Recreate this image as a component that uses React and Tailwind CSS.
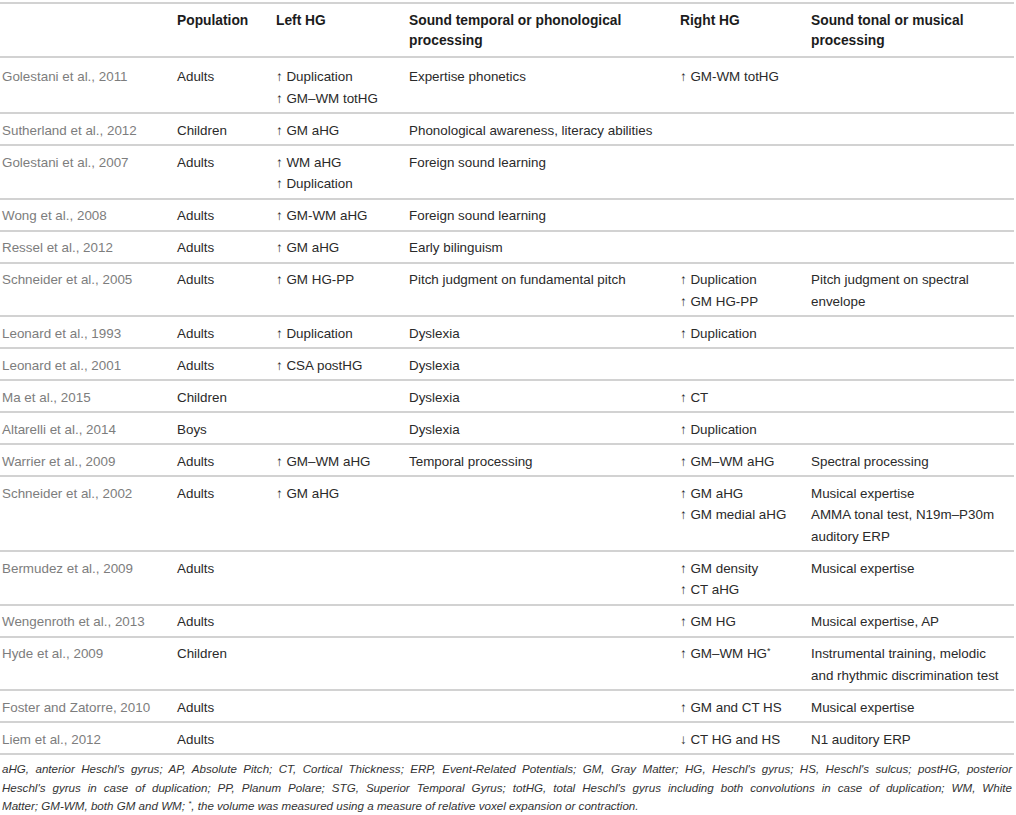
import React from 'react';

const rows = [
  { study: 'Golestani et al., 2011', pop: 'Adults', left: ['↑ Duplication', '↑ GM–WM totHG'], sound: ['Expertise phonetics'], right: ['↑ GM-WM totHG'], tonal: [] },
  { study: 'Sutherland et al., 2012', pop: 'Children', left: ['↑ GM aHG'], sound: ['Phonological awareness, literacy abilities'], right: [], tonal: [] },
  { study: 'Golestani et al., 2007', pop: 'Adults', left: ['↑ WM aHG', '↑ Duplication'], sound: ['Foreign sound learning'], right: [], tonal: [] },
  { study: 'Wong et al., 2008', pop: 'Adults', left: ['↑ GM-WM aHG'], sound: ['Foreign sound learning'], right: [], tonal: [] },
  { study: 'Ressel et al., 2012', pop: 'Adults', left: ['↑ GM aHG'], sound: ['Early bilinguism'], right: [], tonal: [] },
  { study: 'Schneider et al., 2005', pop: 'Adults', left: ['↑ GM HG-PP'], sound: ['Pitch judgment on fundamental pitch'], right: ['↑ Duplication', '↑ GM HG-PP'], tonal: ['Pitch judgment on spectral', 'envelope'] },
  { study: 'Leonard et al., 1993', pop: 'Adults', left: ['↑ Duplication'], sound: ['Dyslexia'], right: ['↑ Duplication'], tonal: [] },
  { study: 'Leonard et al., 2001', pop: 'Adults', left: ['↑ CSA postHG'], sound: ['Dyslexia'], right: [], tonal: [] },
  { study: 'Ma et al., 2015', pop: 'Children', left: [], sound: ['Dyslexia'], right: ['↑ CT'], tonal: [] },
  { study: 'Altarelli et al., 2014', pop: 'Boys', left: [], sound: ['Dyslexia'], right: ['↑ Duplication'], tonal: [] },
  { study: 'Warrier et al., 2009', pop: 'Adults', left: ['↑ GM–WM aHG'], sound: ['Temporal processing'], right: ['↑ GM–WM aHG'], tonal: ['Spectral processing'] },
  { study: 'Schneider et al., 2002', pop: 'Adults', left: ['↑ GM aHG'], sound: [], right: ['↑ GM aHG', '↑ GM medial aHG'], tonal: ['Musical expertise', 'AMMA tonal test, N19m–P30m', 'auditory ERP'] },
  { study: 'Bermudez et al., 2009', pop: 'Adults', left: [], sound: [], right: ['↑ GM density', '↑ CT aHG'], tonal: ['Musical expertise'] },
  { study: 'Wengenroth et al., 2013', pop: 'Adults', left: [], sound: [], right: ['↑ GM HG'], tonal: ['Musical expertise, AP'] },
  { study: 'Hyde et al., 2009', pop: 'Children', left: [], sound: [], right: ['↑ GM–WM HG*'], tonal: ['Instrumental training, melodic', 'and rhythmic discrimination test'] },
  { study: 'Foster and Zatorre, 2010', pop: 'Adults', left: [], sound: [], right: ['↑ GM and CT HS'], tonal: ['Musical expertise'] },
  { study: 'Liem et al., 2012', pop: 'Adults', left: [], sound: [], right: ['↓ CT HG and HS'], tonal: ['N1 auditory ERP'] },
];

const Line = ({ text }) => {
  if (text.endsWith('*')) {
    return (
      <div>
        {text.slice(0, -1)}
        <sup className="text-[9px]">*</sup>
      </div>
    );
  }
  return <div>{text}</div>;
};

const Cell = ({ lines, first, className = '' }) => (
  <td
    className={`align-top pl-[2px] pr-1 whitespace-nowrap ${
      first ? 'pt-[8px] pb-[3px]' : 'pt-[5.5px] pb-[3px]'
    } ${className}`}
  >
    {lines.map((l, i) => (
      <Line key={i} text={l} />
    ))}
  </td>
);

const App = () => {
  return (
    <div
      className="bg-white min-h-screen pt-[2px] text-[13.4px] text-[#2a2a2a]"
      style={{ fontFamily: '"Liberation Sans", Arial, sans-serif' }}
    >
      <table className="w-[1014px] table-fixed border-collapse leading-[21.5px]">
        <colgroup>
          <col className="w-[175px]" />
          <col className="w-[99px]" />
          <col className="w-[133px]" />
          <col className="w-[271px]" />
          <col className="w-[131px]" />
          <col className="w-[205px]" />
        </colgroup>
        <thead>
          <tr className="border-y-2 border-[#d2d2d2] font-bold text-[13.8px] text-[#1c1c1c] text-left leading-[20px]">
            <th className="pt-[7px] pb-[5px]"></th>
            <th className="align-top pl-[2px] pt-[7px] pb-[5px]">Population</th>
            <th className="align-top pl-[2px] pt-[7px] pb-[5px]">Left HG</th>
            <th className="align-top pl-[2px] pt-[7px] pb-[5px] whitespace-nowrap">
              Sound temporal or phonological
              <br />
              processing
            </th>
            <th className="align-top pl-[2px] pt-[7px] pb-[5px]">Right HG</th>
            <th className="align-top pl-[2px] pt-[7px] pb-[5px] whitespace-nowrap">
              Sound tonal or musical
              <br />
              processing
            </th>
          </tr>
        </thead>
        <tbody>
          {rows.map((r, i) => (
            <tr key={r.study} className="border-b-2 border-[#d2d2d2]">
              <Cell first={i === 0} lines={[r.study]} className="text-[#7d7d7d]" />
              <Cell first={i === 0} lines={[r.pop]} />
              <Cell first={i === 0} lines={r.left} />
              <Cell first={i === 0} lines={r.sound} />
              <Cell first={i === 0} lines={r.right} />
              <Cell first={i === 0} lines={r.tonal} />
            </tr>
          ))}
        </tbody>
      </table>

      <div className="w-[1012px] pl-[2px] pt-[5px] italic text-[11.6px] leading-[18.5px] text-[#333]">
        <div className="text-justify [text-align-last:justify]">
          aHG, anterior Heschl's gyrus; AP, Absolute Pitch; CT, Cortical Thickness; ERP, Event-Related Potentials; GM, Gray Matter; HG, Heschl's gyrus; HS, Heschl's sulcus; postHG, posterior
        </div>
        <div className="text-justify [text-align-last:justify]">
          Heschl's gyrus in case of duplication; PP, Planum Polare; STG, Superior Temporal Gyrus; totHG, total Heschl's gyrus including both convolutions in case of duplication; WM, White
        </div>
        <div>
          Matter; GM-WM, both GM and WM; <sup className="text-[8px]">*</sup>, the volume was measured using a measure of relative voxel expansion or contraction.
        </div>
      </div>
    </div>
  );
};

export default App;
